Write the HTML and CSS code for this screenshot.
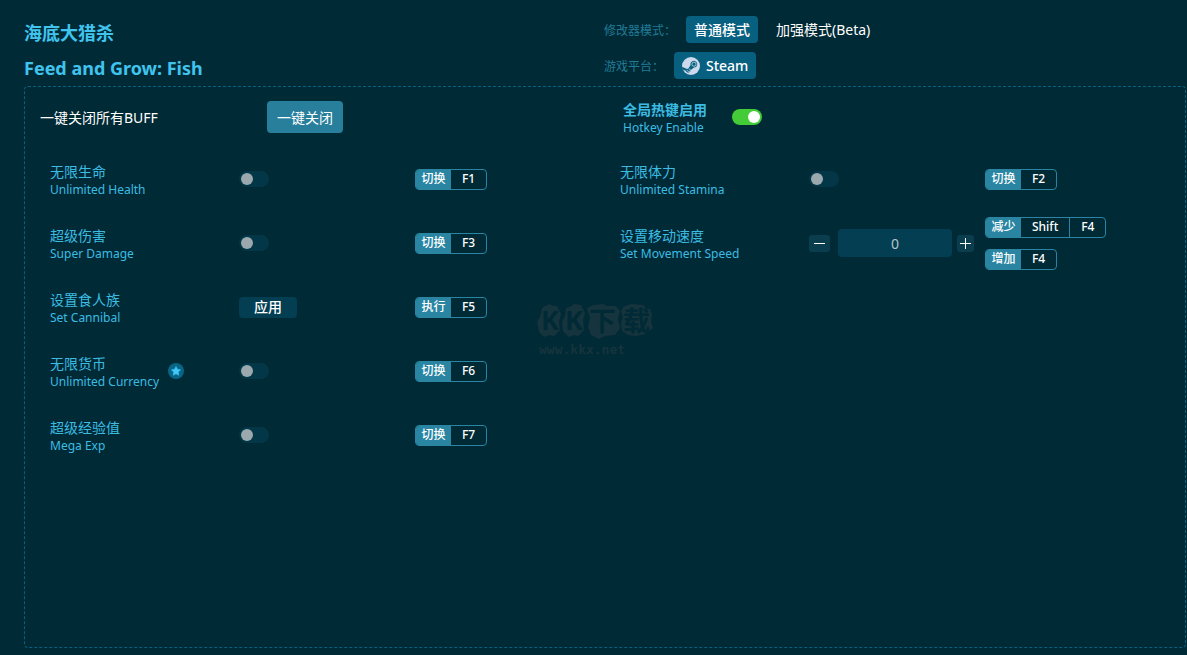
FILE: index.html
```html
<!DOCTYPE html>
<html lang="zh-CN">
<head>
<meta charset="utf-8">
<meta name="viewport" content="width=device-width, initial-scale=1">
<title>Feed and Grow: Fish</title>
<link rel="stylesheet" href="styles.css">
</head>
<body>
<div class="page">
  <header class="header">
    <div class="titles">
      <h1 class="title">海底大猎杀</h1>
      <h2 class="title title-en">Feed and Grow: Fish</h2>
    </div>
    <div class="options">
      <div class="option-row">
        <span class="option-label">修改器模式：</span>
        <button class="pill pill-active" type="button">普通模式</button>
        <button class="pill" type="button">加强模式(Beta)</button>
      </div>
      <div class="option-row">
        <span class="option-label">游戏平台：</span>
        <button class="pill pill-active pill-icon" type="button">
          <svg class="steam" viewBox="0 0 18 18" aria-hidden="true">
            <circle cx="9" cy="9" r="9" fill="#cdd9ec"/>
            <path d="M0 9.8 5 11.9a2.5 2.5 0 0 1 1.3-.4l2.3-3.3a3.4 3.4 0 1 1 3.4 2.4l-3.3 2.4a2.5 2.5 0 0 1-4.9.8L.5 12.4A9 9 0 0 1 0 9.8Z" fill="#086080"/>
            <circle cx="12" cy="7.2" r="2.1" fill="#086080" stroke="#cdd9ec" stroke-width=".8"/>
            <path d="m4.7 13.4 1.2.5a1.3 1.3 0 1 0 .8-1.9" fill="none" stroke="#cdd9ec" stroke-width=".8"/>
          </svg>
          Steam
        </button>
      </div>
    </div>
  </header>

  <main class="panel">
    <div class="columns toolbar">
      <div class="close-all">
        <span class="close-label">一键关闭所有BUFF</span>
        <button class="close-button" type="button">一键关闭</button>
      </div>
      <div class="hotkey">
        <label class="name" for="hotkey"><b class="zh">全局热键启用</b><span class="en">Hotkey Enable</span></label>
        <input class="switch" id="hotkey" type="checkbox" checked>
      </div>
    </div>

    <div class="columns features">
      <div class="feature-list">
        <div class="feature">
          <label class="name" for="health"><span class="zh">无限生命</span><span class="en">Unlimited Health</span></label>
          <div class="control"><input class="switch" id="health" type="checkbox"></div>
          <div class="keys"><div class="key"><span class="action">切换</span><kbd>F1</kbd></div></div>
        </div>
        <div class="feature">
          <label class="name" for="damage"><span class="zh">超级伤害</span><span class="en">Super Damage</span></label>
          <div class="control"><input class="switch" id="damage" type="checkbox"></div>
          <div class="keys"><div class="key"><span class="action">切换</span><kbd>F3</kbd></div></div>
        </div>
        <div class="feature">
          <label class="name" for="cannibal"><span class="zh">设置食人族</span><span class="en">Set Cannibal</span></label>
          <div class="control"><button class="apply" id="cannibal" type="button">应用</button></div>
          <div class="keys"><div class="key"><span class="action">执行</span><kbd>F5</kbd></div></div>
        </div>
        <div class="feature">
          <div class="starred">
            <label class="name" for="currency"><span class="zh">无限货币</span><span class="en">Unlimited Currency</span></label>
            <svg class="star" viewBox="0 0 16 16" aria-hidden="true">
              <circle cx="8" cy="8" r="8" fill="#086586"/>
              <path d="m8 3.4 1.4 2.9 3.2.5-2.3 2.3.5 3.2L8 10.8l-2.8 1.5.5-3.2-2.3-2.3 3.2-.5Z" fill="#40c8f8" stroke="#40c8f8" stroke-width=".5" stroke-linejoin="round"/>
            </svg>
          </div>
          <div class="control"><input class="switch" id="currency" type="checkbox"></div>
          <div class="keys"><div class="key"><span class="action">切换</span><kbd>F6</kbd></div></div>
        </div>
        <div class="feature">
          <label class="name" for="exp"><span class="zh">超级经验值</span><span class="en">Mega Exp</span></label>
          <div class="control"><input class="switch" id="exp" type="checkbox"></div>
          <div class="keys"><div class="key"><span class="action">切换</span><kbd>F7</kbd></div></div>
        </div>
      </div>

      <div class="feature-list">
        <div class="feature">
          <label class="name" for="stamina"><span class="zh">无限体力</span><span class="en">Unlimited Stamina</span></label>
          <div class="control"><input class="switch" id="stamina" type="checkbox"></div>
          <div class="keys"><div class="key"><span class="action">切换</span><kbd>F2</kbd></div></div>
        </div>
        <div class="feature">
          <label class="name" for="speed"><span class="zh">设置移动速度</span><span class="en">Set Movement Speed</span></label>
          <div class="control stepper">
            <button class="step step-minus" type="button" aria-label="减少"><svg viewBox="0 0 11 11"><path d="M0 5.5h11"/></svg></button>
            <input class="amount" id="speed" type="text" value="0">
            <button class="step" type="button" aria-label="增加"><svg viewBox="0 0 11 11"><path d="M0 5.5h11M5.5 0v11"/></svg></button>
          </div>
          <div class="keys">
            <div class="key"><span class="action">减少</span><kbd>Shift</kbd><kbd>F4</kbd></div>
            <div class="key"><span class="action">增加</span><kbd>F4</kbd></div>
          </div>
        </div>
      </div>
    </div>
  </main>

  <svg class="watermark" viewBox="0 -12 124 72" aria-hidden="true">
    <g fill="#16343d">
      <path d="m5 5 3-2 5-2 3 2 4 0 4 8-2 8 1 8-6 6-5-1-5 2-5-5-2-10 3-5Z"/>
      <path d="m29 5 4-1 4-3 7 1 4 8-2 7 1 10-6 6-4-1-5 2-6-6-1-9 3-6Z"/>
      <path d="m50 5 7-3 10-1 2 2 10 0 4 5-2 8 2 9-5 7-10 1-6 3-8-4-3-8 2-9Z"/>
      <path d="m86 4 8-3 12 1 4 4 3 0 2 5-1 7 2 7-8 6-9 2-8-1-6-4-1-8 2-6-2-5Z"/>
    </g>
    <g class="watermark-logo">
      <text x="4" y="27">K</text><text x="28" y="27">K</text><text x="52" y="28">下</text><text x="86" y="28">载</text>
    </g>
    <text class="watermark-url" x="2" y="51">www.kkx.net</text>
  </svg>
</div>
</body>
</html>
```
FILE: styles.css
```css
* {
  box-sizing: border-box;
}

body {
  margin: 0;
  background: #002a35;
  color: #fff;
  font-family: "Noto Sans", "Noto Sans CJK SC", sans-serif;
  font-size: 14px;
}

button,
input,
kbd {
  margin: 0;
  padding: 0;
  border: 0;
  color: inherit;
  font: inherit;
}

.page {
  position: relative;
  display: flex;
  flex-direction: column;
  min-height: 100vh;
  padding: 16px 1px 7px 24px;
}

.header {
  display: grid;
  grid-template-columns: 1fr 1fr;
  height: 70px;
  padding-right: 2px;
}

.title {
  margin: 0;
  color: #40c4ee;
  font-size: 18px;
  line-height: 35px;
  font-weight: 700;
}

.options {
  display: flex;
  flex-direction: column;
  gap: 9px;
}

.option-row {
  display: flex;
  align-items: center;
}

.option-label {
  margin-right: 10px;
  color: #217b97;
  font-size: 12px;
}

.pill {
  height: 27px;
  margin-right: 10px;
  padding: 0 8px;
  border-radius: 4px;
  background: transparent;
  line-height: 27px;
}

.pill-active {
  background: #086080;
  font-weight: 500;
}

.pill-icon {
  display: flex;
  align-items: center;
  gap: 6px;
}

.steam {
  width: 18px;
  height: 18px;
}

.panel {
  flex: 1;
  border: 1px dashed #086080;
  border-radius: 4px;
}

.columns {
  display: grid;
  grid-template-columns: 1fr 1fr;
}

.toolbar {
  gap: 3px;
  height: 60px;
  padding-left: 15px;
}

.close-all,
.hotkey {
  display: flex;
  align-items: center;
}

.close-label {
  width: 227px;
}

.close-button {
  height: 32px;
  padding: 0 10px;
  border-radius: 4px;
  background: #277f9b;
}

.hotkey {
  gap: 25px;
  padding-left: 9px;
}

.name {
  display: flex;
  flex-direction: column;
  padding-top: 2px;
  color: #3cbce3;
}

.zh {
  font-size: 14px;
  line-height: 18px;
}

.en {
  font-size: 12px;
  line-height: 17px;
}

.switch {
  width: 30px;
  height: 16px;
  padding: 2px;
  border-radius: 8px;
  background: #033747;
  appearance: none;
}

.switch::before {
  content: "";
  display: block;
  width: 12px;
  height: 12px;
  border-radius: 6px;
  background: #9ba9af;
}

.switch:checked {
  background: #43cc38;
}

.switch:checked::before {
  margin-left: 14px;
  background: #fff;
}

.features {
  gap: 5px;
  padding-left: 25px;
}

.feature {
  display: grid;
  grid-template-columns: 189px 176px 1fr;
  align-items: center;
  height: 64px;
}

.control {
  display: flex;
  align-items: center;
}

.starred {
  display: flex;
  align-items: center;
  gap: 9px;
}

.star {
  width: 16px;
  height: 16px;
}

.apply {
  width: 58px;
  height: 21px;
  border-radius: 4px;
  background: #033e52;
  line-height: 20px;
  font-weight: 500;
}

.step {
  display: flex;
  align-items: center;
  justify-content: center;
  width: 17px;
  height: 17px;
  border-radius: 3px;
  background: #0a3d4e;
}

.step-minus {
  width: 21px;
}

.step svg {
  width: 11px;
  height: 11px;
  stroke: #fff;
}

.amount {
  width: 114px;
  height: 28px;
  margin: 0 5px 0 8px;
  border-radius: 4px;
  background: #033e52;
  color: #b6c4c9;
  text-align: center;
}

.keys {
  display: flex;
  flex-direction: column;
  align-items: flex-start;
  gap: 11px;
}

.key {
  display: flex;
  height: 21px;
  overflow: hidden;
  border: 1px solid #2985a2;
  border-radius: 4px;
  font-size: 12px;
  line-height: 18px;
  font-weight: 500;
}

.action {
  width: 35px;
  background: #2985a2;
  text-align: center;
}

.key kbd {
  min-width: 35px;
  padding: 0 11px;
  text-align: center;
}

.key kbd + kbd {
  border-left: 1px solid #2985a2;
}

.watermark {
  position: absolute;
  top: 291px;
  left: 537px;
  width: 124px;
  height: 72px;
  overflow: visible;
  pointer-events: none;
}

.watermark-logo {
  fill: #002a35;
  font-size: 27px;
  font-weight: 700;
}

.watermark-url {
  fill: #16343d;
  font-family: "DejaVu Sans Mono", monospace;
  font-size: 13px;
  font-weight: 700;
}
```
